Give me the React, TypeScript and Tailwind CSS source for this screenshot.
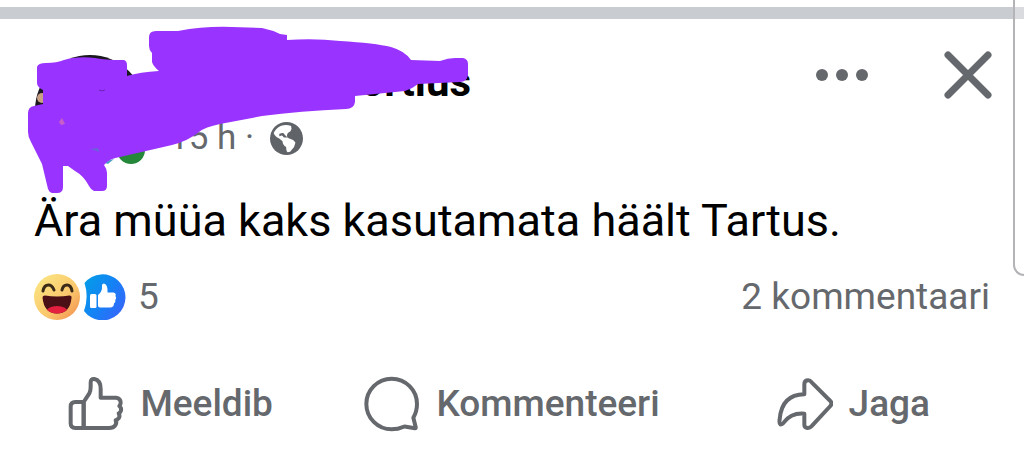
import type { ReactNode } from "react";

const LikeIcon = () => (
  <svg viewBox="54 48 168 168" className="size-14 shrink-0" fill="none" stroke="currentColor" strokeWidth={12} strokeLinecap="round" strokeLinejoin="round" aria-hidden="true">
    <path d="M101 126H76Q62 126 62 140V190Q62 204 76 204H101Z" />
    <path d="M101 126L118 100Q122 92 122 80V68Q122 56 133 57Q152 61 152 86V113H198Q212 115 212 128Q212 134 208 138Q215 144 213 152Q211 158 206 160Q211 168 206 175Q202 180 197 181Q201 190 195 197Q190 204 178 204H101Z" />
  </svg>
);

const CommentIcon = () => (
  <svg viewBox="40 48 168 168" className="size-14 shrink-0" fill="none" stroke="currentColor" strokeWidth={12} strokeLinecap="round" strokeLinejoin="round" aria-hidden="true">
    <path d="M188 173Q199 154 199 132A76 76 0 1 0 123 208Q143 208 157 201Q161 199 166 200L193 205Q196 205 195 201Z" />
  </svg>
);

const ShareIcon = () => (
  <svg viewBox="166 48 168 168" className="size-14 shrink-0" fill="none" stroke="currentColor" strokeWidth={12} strokeLinecap="round" strokeLinejoin="round" aria-hidden="true">
    <path d="M248 103V72Q248 61 260 61Q265 61 270 67L326 123Q333 131 326 138L272 196Q266 204 257 204Q248 202 248 194V161Q208 158 186 188Q181 194 176 193Q172 190 174 178Q180 104 248 103Z" />
  </svg>
);

const GlobeIcon = () => (
  <svg viewBox="0 0 100 100" className="size-[33px]" role="img" aria-label="Avalik">
    <circle cx="50" cy="50" r="50" fill="#606468" />
    <path
      d="M34 11Q50 6 64 12Q67 20 62 28L54 33Q50 38 52 46L58 50Q72 53 77 63Q75 76 66 84Q62 92 54 92Q49 90 49 76Q38 69 38 58L28 50Q15 44 11 33Q18 18 34 11Z"
      fill="#fff"
    />
    <path d="M29 43Q25 34 34 34Q42 32 44 38L53 47Q46 48 41 46Q38 39 33 42Z" fill="#606468" />
  </svg>
);

const HahaReaction = () => (
  <svg viewBox="0 0 46 46" className="size-[46px]" role="img" aria-label="Haha">
    <defs>
      <linearGradient id="haha" x1="0" y1="0" x2="1" y2="1">
        <stop offset="0.1" stopColor="#fbe481" />
        <stop offset="0.6" stopColor="#fac66c" />
        <stop offset="1" stopColor="#f28a4b" />
      </linearGradient>
      <clipPath id="mouth">
        <path d="M8.500 23.500Q8.500 21.500 11 21.500Q23 23.500 35.500 21.500Q38 21.500 37.500 24Q36 39.500 23 39.500Q10 39.500 8.500 23.500Z" />
      </clipPath>
    </defs>
    <circle cx="23" cy="23" r="23" fill="url(#haha)" />
    <path d="M9 17Q10 11 14.500 11Q18 11 20 16M28 16Q29 11 33 11Q37 11 38 17" fill="none" stroke="#3b2a17" strokeWidth={3} strokeLinecap="round" />
    <g clipPath="url(#mouth)">
      <rect x="8" y="21" width="30" height="19" fill="#4b0f16" />
      <ellipse cx="23" cy="38" rx="11" ry="6" fill="#e5203f" />
    </g>
  </svg>
);

const LikeReaction = () => (
  <svg viewBox="0 0 46 46" className="size-[46px]" role="img" aria-label="Meeldib">
    <defs>
      <linearGradient id="like" x1="0" y1="0.2" x2="1" y2="0.9">
        <stop offset="0" stopColor="#059be9" />
        <stop offset="0.5" stopColor="#1680f5" />
        <stop offset="1" stopColor="#3c62fb" />
      </linearGradient>
    </defs>
    <path d="M4.500 9A23 23 0 1 1 4 37Q9 23 4.500 9Z" fill="url(#like)" />
    <rect x="10" y="20" width="6.500" height="14" rx="1.500" fill="#fff" />
    <path d="M18 21Q22.500 18 22 11.500Q22 9.500 24 9.500Q28 10.500 27.500 18.500H33.500Q36.500 19 35.500 22Q37 24 35.300 26Q36 28.500 34 29.500Q34 33.500 30 33.500H20Q18 33.500 18 31.500Z" fill="#fff" />
  </svg>
);

const Avatar = () => (
  <svg viewBox="0 0 110 110" className="size-[110px] shrink-0" aria-hidden="true">
    <circle cx="55" cy="55" r="55" fill="#1c1820" />
    <circle cx="7" cy="43" r="5" fill="#c9a184" />
    <path d="M50 98L82 98L82 114L50 114Z" fill="#fff" />
    <path d="M67 107L79 104L73 109Z" fill="#4fa3c4" />
    <circle cx="96" cy="95" r="17" fill="#fff" />
    <circle cx="96" cy="95" r="14" fill="#24873a" />
  </svg>
);

// marker strokes that hide the poster's name and photo
const Scribble = () => (
  <svg viewBox="0 0 480 200" className="pointer-events-none absolute left-0 top-0 h-[200px] w-[480px]" aria-hidden="true">
    <path
      fill="#9933ff"
      d="M149 37Q149 31 156 31L178 31Q205 26 232 27L262 28Q272 30 280 34L287 35V40Q315 38 340 41Q375 43 391 47Q405 51 411 60L440 61Q448 58 455 58H463Q468 59 468 64V75Q467 82 460 82L418 84Q412 89 405 91L355 96V102Q354 109 346 109Q300 111 262 116L220 124Q205 127 199 132Q188 141 172 145L120 157Q110 158 104 165Q107 169 107 173V186Q107 191 102 191H94Q91 190 89 186Q84 176 75 171L68 166H63V187Q63 193 57 193H52Q49 192 48 189L42 164L31 142Q28 137 28 132V113Q28 107 34 106L43 104V90Q37 87 37 83V67Q38 63 46 63Q57 63 64 60Q77 56 95 58Q108 60 117 60L124 60Q127 61 127 65V76Q140 72 159 71Q153 66 152 62V53Q149 50 149 46Z"
    />
    <path d="M59 122L62 118L65 124L61 125Z" fill="#c65fc8" />
    <path d="M99 90Q102 92 105 90" fill="none" stroke="#6d20b5" />
    <path d="M90 149L98 148L99 152L94 150Z" fill="#6a62d8" />
  </svg>
);

const ActionButton = ({ icon, label }: { icon: ReactNode; label: string }) => (
  <button type="button" className="flex items-center justify-center gap-4 text-[37px] leading-[60px] font-medium">
    {icon}
    {label}
  </button>
);

export default function App() {
  return (
    <main className="relative overflow-hidden bg-white pt-[7px] pb-8 font-[Roboto,sans-serif] text-[#65686c]">
      <div className="h-3 bg-[#c9ccd1]" />

      <article>
        <header className="flex items-start gap-6 pt-9 pr-8 pl-[35px]">
          <Avatar />
          <div className="w-[302px] pt-[3px]">
            <h2 className="text-right text-[42px] leading-12 font-bold text-black">ortius</h2>
            <p className="mt-3 flex items-center gap-4 text-[35px] leading-10">
              15 h ·
              <GlobeIcon />
            </p>
          </div>
          <div className="-mt-1 ml-auto flex items-center gap-[76px]">
            <button type="button" aria-label="Veel">
              <svg viewBox="0 0 52 12" className="h-3 w-[52px]" fill="currentColor">
                <circle cx="6" cy="6" r="6" />
                <circle cx="26" cy="6" r="6" />
                <circle cx="46" cy="6" r="6" />
              </svg>
            </button>
            <button type="button" aria-label="Sulge">
              <svg viewBox="0 0 48 48" className="size-12" fill="none" stroke="currentColor" strokeWidth={7} strokeLinecap="round">
                <path d="M4 4L44 44M44 4L4 44" />
              </svg>
            </button>
          </div>
        </header>

        <p className="mt-7 px-[34px] text-[45px] leading-14 text-black">Ära müüa kaks kasutamata häält Tartus.</p>

        <div className="mt-6 flex items-center justify-between px-[34px] text-[37px] leading-12">
          <div className="flex items-center">
            <HahaReaction />
            <LikeReaction />
            <span className="ml-3">5</span>
          </div>
          <a href="#kommentaarid">2 kommentaari</a>
        </div>

        <div className="mt-[53px] grid grid-cols-3">
          <ActionButton icon={<LikeIcon />} label="Meeldib" />
          <ActionButton icon={<CommentIcon />} label="Kommenteeri" />
          <ActionButton icon={<ShareIcon />} label="Jaga" />
        </div>
      </article>

      <Scribble />
      {/* edge of the neighbouring card */}
      <div className="absolute -top-1 right-0 h-[280px] w-[11px] rounded-bl-xl border-b-2 border-l-2 border-[#b4b4b8] bg-white/30" />
    </main>
  );
}
